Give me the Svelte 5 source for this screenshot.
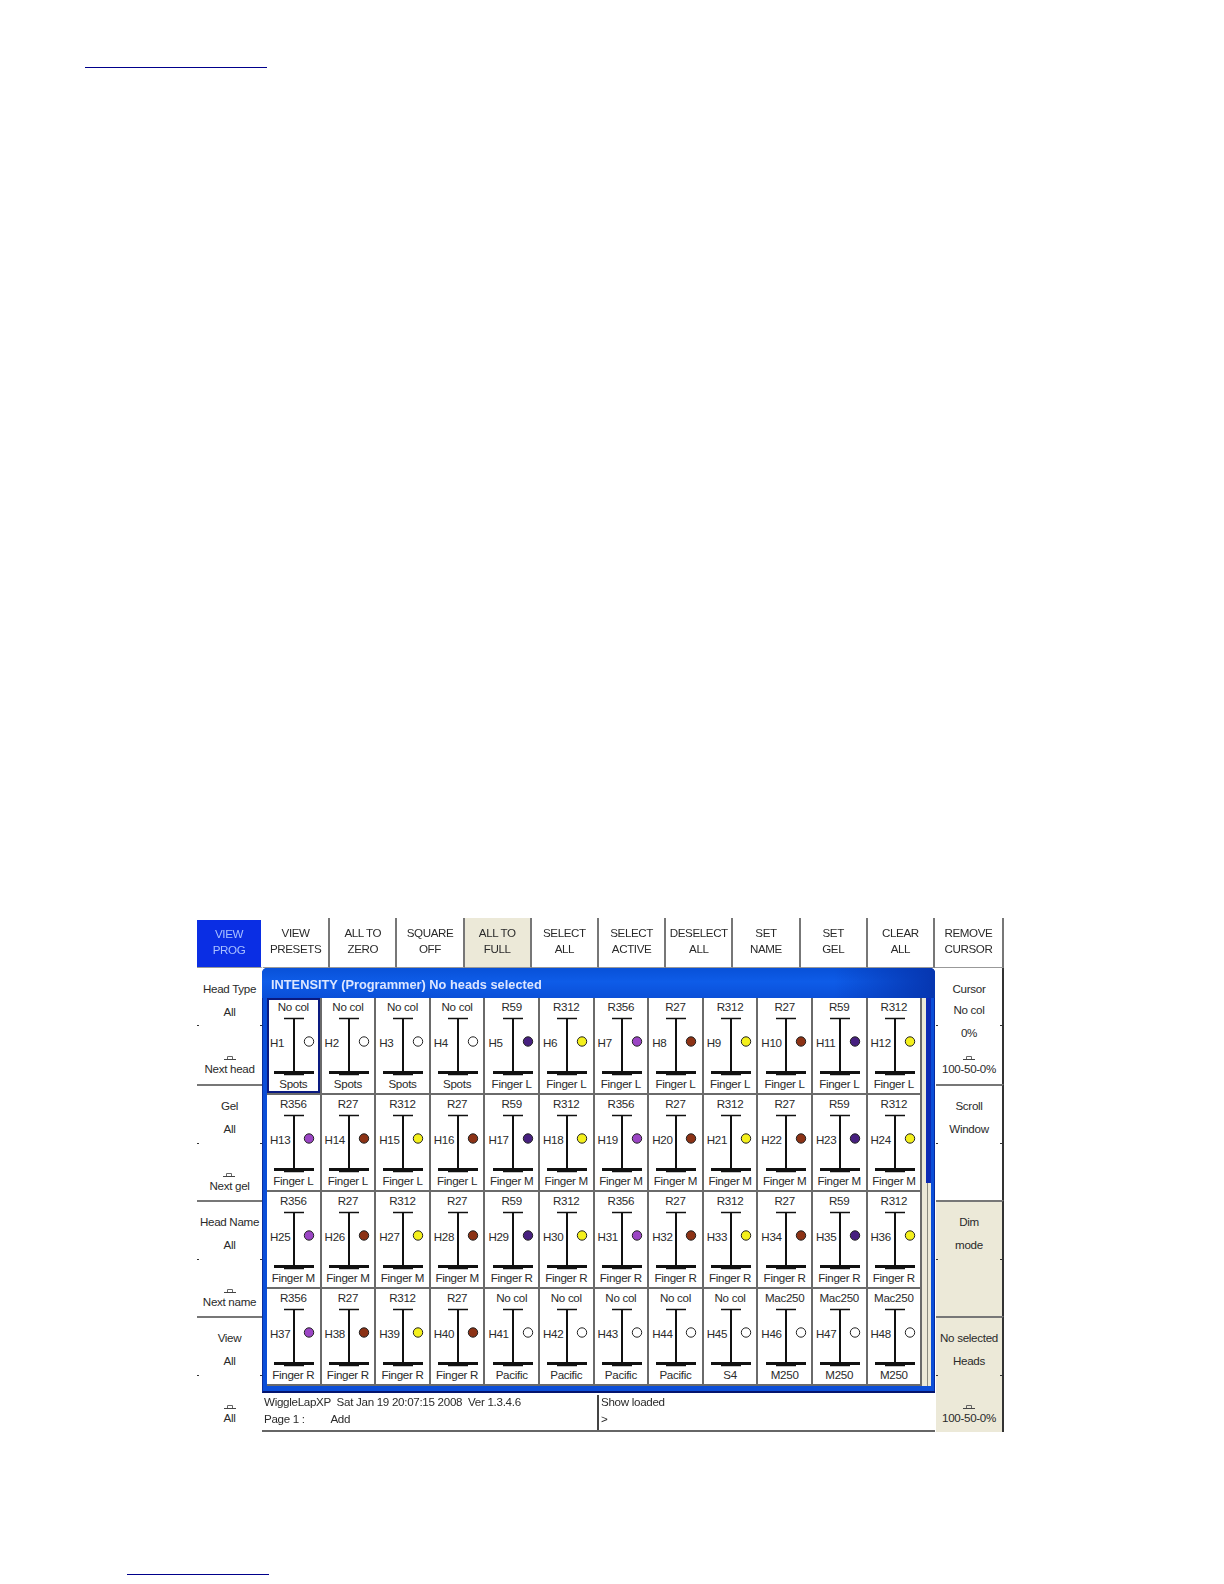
<script lang="ts">
    const topButtons = [
        ["VIEW", "PROG", "active"],
        ["VIEW", "PRESETS", ""],
        ["ALL TO", "ZERO", ""],
        ["SQUARE", "OFF", ""],
        ["ALL TO", "FULL", "beige"],
        ["SELECT", "ALL", ""],
        ["SELECT", "ACTIVE", ""],
        ["DESELECT", "ALL", ""],
        ["SET", "NAME", ""],
        ["SET", "GEL", ""],
        ["CLEAR", "ALL", ""],
        ["REMOVE", "CURSOR", ""]
    ];

    const leftPanels = [
        { lines: ["Head Type", "All"], foot: "Next head" },
        { lines: ["Gel", "All"], foot: "Next gel" },
        { lines: ["Head Name", "All"], foot: "Next name" },
        { lines: ["View", "All"], foot: "All" }
    ];

    const dots: Record<string, string> = {
        "R356": "#9b45c4",
        "R27": "#8c3215",
        "R312": "#f4f01c",
        "R59": "#47207f"
    };

    const gels = ["R59", "R312", "R356", "R27", "R312", "R27", "R59", "R312", "R356", "R27", "R312", "R27"];

    // gel and group of each head, H1 to H48
    const heads = [
        ...Array(4).fill(["No col", "Spots"]),
        ...gels.map((g) => [g, "Finger L"]),
        ...gels.map((g) => [g, "Finger M"]),
        ...gels.map((g) => [g, "Finger R"]),
        ...Array(4).fill(["No col", "Pacific"]),
        ["No col", "S4"],
        ...Array(3).fill(["Mac250", "M250"])
    ];
</script>

{#snippet hat()}
    <svg class="hat" width="12" height="4" viewBox="0 0 12 4">
        <path d="M3.500 3V.5h5V3" stroke="#666" fill="none" />
        <path d="M0 3.500h12" stroke="#444" fill="none" />
    </svg>
{/snippet}

<div class="page">
    <div class="rule top-rule"></div>

    <div class="screen">
        <div class="topbar">
            {#each topButtons as b}
                <div class="btn {b[2]}">
                    <span>{b[0]}</span>
                    <span>{b[1]}</span>
                </div>
            {/each}
        </div>

        <div class="body">
            <div class="side">
                {#each leftPanels as p}
                    <div class="panel">
                        <span class="line">{p.lines[0]}</span>
                        <span class="line">{p.lines[1]}</span>
                        <i class="tick"></i>
                        <div class="foot">
                            {@render hat()}
                            <span>{p.foot}</span>
                        </div>
                    </div>
                {/each}
            </div>

            <div class="middle">
                <div class="window">
                    <div class="title">INTENSITY (Programmer) No heads selected</div>
                    <div class="content">
                        <div class="cells">
                            {#each heads as h, i}
                                <div class="cell" class:selected={i === 0}>
                                    <span class="gel">{h[0]}</span>
                                    <span class="num">H{i + 1}</span>
                                    <svg class="fader" width="54" height="60" viewBox="0 0 54 60">
                                        <path d="M18 1.500h20" stroke="#111" stroke-width="1.500" />
                                        <path d="M28 1v54" stroke="#111" stroke-width="2" />
                                        <path d="M8 55.500h40" stroke="#111" stroke-width="3" />
                                        <path d="M18 57.500h20" stroke="#111" stroke-width="1.500" />
                                        <circle cx="43" cy="24.500" r="4.700" fill={dots[h[0]] ?? "#fff"} stroke="#222" stroke-width="1" />
                                    </svg>
                                    <span class="group">{h[1]}</span>
                                </div>
                            {/each}
                        </div>
                        <div class="scroll">
                            <div class="thumb"></div>
                            <div class="track"></div>
                        </div>
                    </div>
                </div>

                <div class="status">
                    <div class="pane left-pane">
                        <span class="wide">WiggleLapXP  Sat Jan 19 20:07:15 2008  Ver 1.3.4.6</span>
                        <span class="wide">Page 1 :         Add</span>
                    </div>
                    <div class="pane">
                        <span>Show loaded</span>
                        <span>&gt;</span>
                    </div>
                </div>
            </div>

            <div class="side right">
                <div class="panel">
                    <span class="line">Cursor</span>
                    <span class="line close">No col</span>
                    <span class="line">0%</span>
                    <i class="tick"></i>
                    <div class="foot">
                        {@render hat()}
                        <span>100-50-0%</span>
                    </div>
                </div>
                <div class="panel">
                    <span class="line">Scroll</span>
                    <span class="line">Window</span>
                    <i class="tick"></i>
                </div>
                <div class="panel beige">
                    <span class="line">Dim</span>
                    <span class="line">mode</span>
                    <i class="tick"></i>
                </div>
                <div class="panel beige">
                    <span class="line">No selected</span>
                    <span class="line">Heads</span>
                    <i class="tick"></i>
                    <div class="foot">
                        {@render hat()}
                        <span>100-50-0%</span>
                    </div>
                </div>
            </div>
        </div>
    </div>

    <div class="rule bottom-rule"></div>
</div>

<style>
    :global(body) {
        margin: 0;
        background: #fff;
    }

    .page {
        height: 1584px;
        padding-top: 67px;
        box-sizing: border-box;
        font-family: "Liberation Sans", Arial, sans-serif;
        font-size: 11.600px;
        letter-spacing: -0.3px;
        color: #2a2a2a;
    }

    .rule {
        height: 1px;
        background: #00008b;
    }

    .top-rule {
        width: 182px;
        margin-left: 85px;
    }

    .bottom-rule {
        width: 142px;
        margin: 142px 0 0 127px;
    }

    .screen {
        width: 807px;
        margin: 850px 0 0 197px;
        filter: blur(0.3px);
    }

    .topbar {
        display: grid;
        grid-template-columns: 66px repeat(10, 1fr) 69px;
        height: 50px;
    }

    .btn {
        display: flex;
        flex-direction: column;
        align-items: center;
        justify-content: center;
        letter-spacing: -0.4px;
        line-height: 16px;
        background: #fff;
        border-right: 2px solid #777;
        border-bottom: 1px solid #999;
        padding-bottom: 4px;
        box-sizing: border-box;
    }

    .btn.active {
        background: #0a2ee4;
        color: #a9c0ff;
        border-right-color: #fff;
        margin-top: 2px;
    }

    .btn.beige {
        background: #ece9d8;
    }

    .body {
        display: grid;
        grid-template-columns: 65px 673px 69px;
    }

    .side {
        display: grid;
        grid-template-rows: repeat(4, 116px);
    }

    .panel {
        position: relative;
        display: flex;
        flex-direction: column;
        align-items: center;
        gap: 8px;
        padding: 12px 0 7px;
        box-sizing: border-box;
        background: #fff;
        border-top: 2px solid #777;
    }

    .panel:first-child {
        padding: 13px 0 8px;
        border-top: 0;
    }

    .panel.beige {
        background: #ece9d8;
    }

    .right .panel {
        margin-left: 1px;
        border-right: 2px solid #333;
    }

    .line {
        line-height: 15px;
        white-space: nowrap;
    }

    .line.close {
        margin-top: -2px;
    }

    .tick {
        position: absolute;
        left: 0;
        right: 0;
        top: 57px;
        height: 1px;
        background: linear-gradient(to right, #333 2px, transparent 2px, transparent calc(100% - 2px), #333 calc(100% - 2px));
    }

    .foot {
        margin-top: auto;
        display: flex;
        flex-direction: column;
        align-items: center;
        line-height: 15px;
        white-space: nowrap;
    }

    .hat {
        display: block;
        margin-bottom: 1px;
    }

    .window {
        background: #0b4ed8;
        border-radius: 5px 5px 0 0;
        box-shadow: inset -1px 0 #062a9c;
    }

    .title {
        height: 30px;
        padding-left: 9px;
        line-height: 34px;
        box-sizing: border-box;
        font-size: 12.800px;
        font-weight: bold;
        letter-spacing: 0;
        color: #dce6ff;
        background: linear-gradient(to right, transparent 85%, #0636b0), linear-gradient(to bottom, #0851d8, #0e5ce8 45%, #0a4fd8);
        border-radius: 5px 5px 0 0;
    }

    .content {
        display: flex;
        padding: 0 4px 5px 4px;
        border-bottom: 2px solid #04146e;
        border-left: 1px solid #0a2e9e;
    }

    .cells {
        display: grid;
        grid-template-columns: repeat(12, 54.600px);
        grid-auto-rows: 97px;
    }

    .cell {
        position: relative;
        display: flex;
        flex-direction: column;
        align-items: center;
        box-sizing: border-box;
        background: #fff;
        border-right: 2px solid #6a6a6a;
        border-bottom: 2px solid #6a6a6a;
    }

    .cell.selected {
        box-shadow: inset 0 0 0 2px #0a1a80;
    }

    .gel {
        margin-top: 1px;
        line-height: 15px;
    }

    .fader {
        display: block;
        flex: none;
        margin-top: 3px;
    }

    .num {
        position: absolute;
        left: 3px;
        top: 37px;
        line-height: 15px;
    }

    .group {
        line-height: 15px;
        margin-top: -1px;
        white-space: nowrap;
    }

    .scroll {
        flex: 1;
        display: flex;
        flex-direction: column;
        background: #ece9d8;
    }

    .thumb {
        height: 185px;
        background: linear-gradient(to right, #ece9d8 4px, #0d2bb4 4px);
    }

    .track {
        flex: 1;
        border-right: 1px solid #8a8a80;
        margin-right: 3px;
    }

    .status {
        display: grid;
        grid-template-columns: 337px 1fr;
        height: 37px;
        margin-top: 2px;
        background: #fff;
        border-bottom: 2px solid #666;
        box-sizing: border-box;
    }

    .pane {
        display: flex;
        flex-direction: column;
        margin-top: -2px;
        padding: 0 0 0 2px;
        line-height: 17px;
    }

    .left-pane {
        padding-left: 2px;
        border-right: 2px solid #444;
        margin-top: 0;
    }

    .left-pane span {
        position: relative;
        top: -2px;
    }

    .wide {
        white-space: pre;
    }
</style>
